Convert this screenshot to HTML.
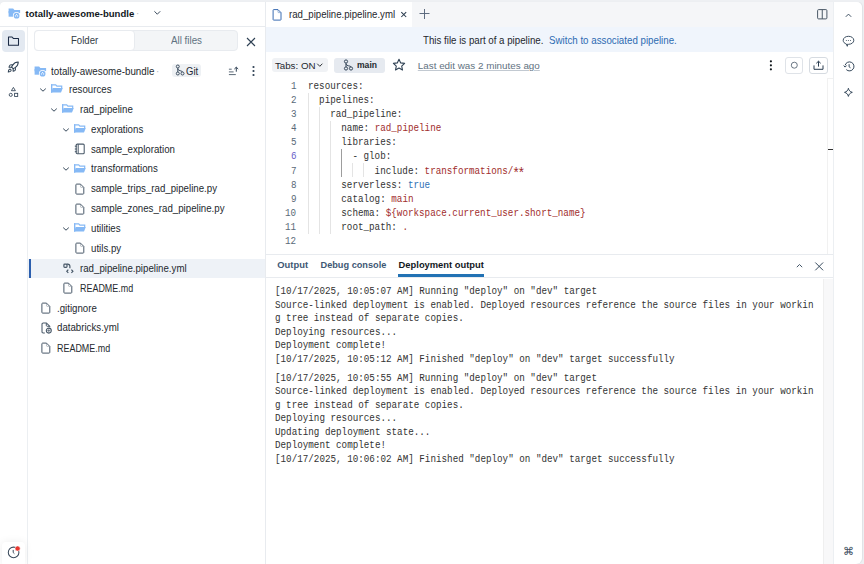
<!DOCTYPE html>
<html><head><meta charset="utf-8"><style>
html,body{margin:0;padding:0;width:864px;height:564px;overflow:hidden;background:#eef0f3;font-family:'Liberation Sans', sans-serif}
.t{position:absolute;white-space:nowrap}
.k{color:#333} .s{color:#9f2d2d} .b{color:#2f6fb5} .ast{display:inline-block;transform:translateY(3px) scale(1.4)}
</style></head><body>
<div style="position:absolute;left:0px;top:0px;width:864px;height:564px;background:#eef0f3"></div>
<div style="position:absolute;left:0px;top:2px;width:862px;height:562px;background:#fff;border-top-left-radius:4px;border-top-right-radius:5px;border-bottom-right-radius:6px;box-shadow:0.5px 0 1px rgba(0,0,0,.06)"></div>
<div style="position:absolute;left:0px;top:26px;width:265px;height:1px;background:#e8ebef"></div>
<svg style="position:absolute;left:7.5px;top:8.3px;" width="13" height="11" viewBox="0 0 13 11" fill="none"><path d="M.6 .4h4.5l1.3 1.6h5.7v3.2H.6z" fill="#86b9f5"/><rect x=".6" y="3" width="6.5" height="5.7" fill="#86b9f5"/><circle cx="8.6" cy="7.7" r="3.7" fill="#fff"/><circle cx="8.6" cy="7.7" r="2.9" fill="#86b9f5"/><circle cx="7.6" cy="7.9" r=".6" fill="#fff"/><circle cx="9.6" cy="7.9" r=".6" fill="#fff"/><circle cx="8.6" cy="6.6" r=".6" fill="#fff"/></svg>
<div class="t" style="left:25.50px;top:7.00px;font-size:9.550px;line-height:14px;color:#11171c;font-weight:700;font-family:'Liberation Sans', sans-serif;">totally-awesome-bundle</div>
<div class="t" style="left:135.50px;top:7.00px;font-size:10.123px;line-height:14px;color:#b0b8c0;font-weight:400;font-family:'Liberation Sans', sans-serif;transform:scaleX(0.9434);transform-origin:0 0;">·</div>
<svg style="position:absolute;left:153px;top:10px;" width="8" height="6" viewBox="0 0 8 6" fill="none"><path d="M1.4 1.3l2.9 2.9 2.9-2.9" stroke="#2e4053" stroke-width=".95"/></svg>
<div style="position:absolute;left:27px;top:27px;width:1px;height:537px;background:#eceff2"></div>
<div style="position:absolute;left:2px;top:30px;width:23px;height:22px;background:#e3e9f1;border-radius:4px"></div>
<svg style="position:absolute;left:7px;top:35px;" width="13" height="12" viewBox="0 0 13 12" fill="none"><path d="M1.5 2h3.6l1.2 1.4h5.2V10.3H1.5z" stroke="#1b2a44" stroke-width="1.05" stroke-linejoin="round"/></svg>
<svg style="position:absolute;left:6.7px;top:61.1px;" width="12.3" height="12.3" viewBox="0 0 24 24" fill="none"><g stroke="#2e4053" stroke-width="2" stroke-linecap="round" stroke-linejoin="round"><path d="M4.5 16.5c-1.5 1.26-2 5-2 5s3.74-.5 5-2c.71-.84.7-2.13-.09-2.91a2.18 2.18 0 0 0-2.91-.09z"/><path d="M12 15l-3-3a22 22 0 0 1 2-3.95A12.88 12.88 0 0 1 22 2c0 2.72-.78 7.5-6 11a22.35 22.35 0 0 1-4 2z"/><path d="M9 12H4s.55-3.03 2-4c1.62-1.08 5 0 5 0"/><path d="M12 15v5s3.03-.55 4-2c1.08-1.62 0-5 0-5"/></g></svg>
<svg style="position:absolute;left:7px;top:85px;" width="13" height="13" viewBox="0 0 13 13" fill="none"><path d="M6.4 2.4L8.4 5.7H4.4z" stroke="#2e4053" stroke-width=".85" stroke-linejoin="round"/><circle cx="3.75" cy="9.85" r="1.55" stroke="#2e4053" stroke-width=".85"/><rect x="7.6" y="8.3" width="3.1" height="3.1" stroke="#2e4053" stroke-width=".85"/></svg>
<div style="position:absolute;left:2px;top:542px;width:23px;height:24px;background:#fff;border-radius:4px;box-shadow:0 0 8px rgba(0,0,0,.07)"></div>
<svg style="position:absolute;left:6px;top:545px;" width="16" height="16" viewBox="0 0 16 16" fill="none"><circle cx="7.6" cy="7.4" r="5.3" stroke="#3b4b5c" stroke-width="1.05"/><path d="M7.2 4.9v2.6l1.2 1.2" stroke="#3b4b5c" stroke-width="1"/><circle cx="11.6" cy="3.5" r="2.6" fill="#e8372f" stroke="#fff" stroke-width=".6"/></svg>
<div style="position:absolute;left:34px;top:29.5px;width:204px;height:21px;background:#f3f5f7;border:1px solid #e8ebef;border-radius:4px;box-sizing:border-box"></div>
<div style="position:absolute;left:34px;top:29.5px;width:101px;height:21px;background:#fff;border:1px solid #e8ebef;border-radius:4px;box-sizing:border-box"></div>
<div class="t" style="left:71.10px;top:34.00px;font-size:10.176px;line-height:14px;color:#333d45;font-weight:400;font-family:'Liberation Sans', sans-serif;transform:scaleX(0.9434);transform-origin:0 0;">Folder</div>
<div class="t" style="left:171.40px;top:34.00px;font-size:10.388px;line-height:14px;color:#5f7281;font-weight:400;font-family:'Liberation Sans', sans-serif;transform:scaleX(0.9434);transform-origin:0 0;">All files</div>
<svg style="position:absolute;left:245px;top:36px;" width="12" height="12" viewBox="0 0 12 12" fill="none"><path d="M2 2l8 8M10 2l-8 8" stroke="#2e4053" stroke-width="1.1"/></svg>
<svg style="position:absolute;left:33.6px;top:65.5px;" width="13" height="11" viewBox="0 0 13 11" fill="none"><path d="M.6 .4h4.5l1.3 1.6h5.7v3.2H.6z" fill="#86b9f5"/><rect x=".6" y="3" width="6.5" height="5.7" fill="#86b9f5"/><circle cx="8.6" cy="7.7" r="3.7" fill="#fff"/><circle cx="8.6" cy="7.7" r="2.9" fill="#86b9f5"/><circle cx="7.6" cy="7.9" r=".6" fill="#fff"/><circle cx="9.6" cy="7.9" r=".6" fill="#fff"/><circle cx="8.6" cy="6.6" r=".6" fill="#fff"/></svg>
<div class="t" style="left:51.40px;top:65.00px;font-size:10.388px;line-height:14px;color:#24292e;font-weight:400;font-family:'Liberation Sans', sans-serif;transform:scaleX(0.9434);transform-origin:0 0;">totally-awesome-bundle</div>
<div class="t" style="left:156.00px;top:65.00px;font-size:10.388px;line-height:14px;color:#b0b8c0;font-weight:400;font-family:'Liberation Sans', sans-serif;transform:scaleX(0.9434);transform-origin:0 0;">·</div>
<svg style="position:absolute;left:39.0px;top:86.88px;" width="8" height="6" viewBox="0 0 8 6" fill="none"><path d="M1.2 1.6l2.8 2.6 2.8-2.6" stroke="#2e4053" stroke-width=".95"/></svg>
<svg style="position:absolute;left:51.0px;top:83.97999999999999px;" width="12" height="10" viewBox="0 0 12 10" fill="none"><path d="M.6 8.6V.8h4.1l1.2 1.3h4.8v2.2" stroke="#86b9f5" stroke-width="1.2" fill="none"/><path d="M.2 8.6L1.6 4.1h10.2L10 8.6z" fill="#86b9f5"/><rect x=".1" y=".2" width="1.1" height="8.4" fill="#86b9f5"/></svg>
<div class="t" style="left:68.70px;top:83.00px;font-size:10.282px;line-height:14px;color:#24292e;font-weight:400;font-family:'Liberation Sans', sans-serif;transform:scaleX(0.9434);transform-origin:0 0;">resources</div>
<svg style="position:absolute;left:50.3px;top:106.75999999999999px;" width="8" height="6" viewBox="0 0 8 6" fill="none"><path d="M1.2 1.6l2.8 2.6 2.8-2.6" stroke="#2e4053" stroke-width=".95"/></svg>
<svg style="position:absolute;left:62.3px;top:103.85999999999999px;" width="12" height="10" viewBox="0 0 12 10" fill="none"><path d="M.6 8.6V.8h4.1l1.2 1.3h4.8v2.2" stroke="#86b9f5" stroke-width="1.2" fill="none"/><path d="M.2 8.6L1.6 4.1h10.2L10 8.6z" fill="#86b9f5"/><rect x=".1" y=".2" width="1.1" height="8.4" fill="#86b9f5"/></svg>
<div class="t" style="left:80.00px;top:103.00px;font-size:10.282px;line-height:14px;color:#24292e;font-weight:400;font-family:'Liberation Sans', sans-serif;transform:scaleX(0.9434);transform-origin:0 0;">rad_pipeline</div>
<svg style="position:absolute;left:61.6px;top:126.63999999999999px;" width="8" height="6" viewBox="0 0 8 6" fill="none"><path d="M1.2 1.6l2.8 2.6 2.8-2.6" stroke="#2e4053" stroke-width=".95"/></svg>
<svg style="position:absolute;left:73.6px;top:123.73999999999998px;" width="12" height="10" viewBox="0 0 12 10" fill="none"><path d="M.6 8.6V.8h4.1l1.2 1.3h4.8v2.2" stroke="#86b9f5" stroke-width="1.2" fill="none"/><path d="M.2 8.6L1.6 4.1h10.2L10 8.6z" fill="#86b9f5"/><rect x=".1" y=".2" width="1.1" height="8.4" fill="#86b9f5"/></svg>
<div class="t" style="left:91.30px;top:123.00px;font-size:10.282px;line-height:14px;color:#24292e;font-weight:400;font-family:'Liberation Sans', sans-serif;transform:scaleX(0.9434);transform-origin:0 0;">explorations</div>
<svg style="position:absolute;left:74.1px;top:142.92px;" width="12" height="12" viewBox="0 0 12 12" fill="none"><rect x="2.2" y="1.1" width="8" height="9.6" rx="1" stroke="#485868" stroke-width="1.05"/><path d="M4.2 1.2v9.4 M.8 3.2h1.9M.8 6h1.9M.8 8.7h1.9" stroke="#485868" stroke-width="1"/></svg>
<div class="t" style="left:91.10px;top:143.00px;font-size:10.282px;line-height:14px;color:#24292e;font-weight:400;font-family:'Liberation Sans', sans-serif;transform:scaleX(0.9434);transform-origin:0 0;">sample_exploration</div>
<svg style="position:absolute;left:61.6px;top:166.39999999999998px;" width="8" height="6" viewBox="0 0 8 6" fill="none"><path d="M1.2 1.6l2.8 2.6 2.8-2.6" stroke="#2e4053" stroke-width=".95"/></svg>
<svg style="position:absolute;left:73.6px;top:163.49999999999997px;" width="12" height="10" viewBox="0 0 12 10" fill="none"><path d="M.6 8.6V.8h4.1l1.2 1.3h4.8v2.2" stroke="#86b9f5" stroke-width="1.2" fill="none"/><path d="M.2 8.6L1.6 4.1h10.2L10 8.6z" fill="#86b9f5"/><rect x=".1" y=".2" width="1.1" height="8.4" fill="#86b9f5"/></svg>
<div class="t" style="left:91.30px;top:162.00px;font-size:10.282px;line-height:14px;color:#24292e;font-weight:400;font-family:'Liberation Sans', sans-serif;transform:scaleX(0.9434);transform-origin:0 0;">transformations</div>
<svg style="position:absolute;left:74.6px;top:182.68px;" width="10" height="12" viewBox="0 0 10 12" fill="none"><path d="M1.6 1.1h3.9l3.3 3.3v6c0 .4-.3.7-.7.7H1.6c-.4 0-.7-.3-.7-.7V1.8c0-.4.3-.7.7-.7z" stroke="#485868" stroke-width="1" stroke-linejoin="round"/><path d="M5.5 1.3v2.4c0 .4.3.7.7.7h2.4" stroke="#485868" stroke-width=".6" opacity=".6"/></svg>
<div class="t" style="left:91.10px;top:182.00px;font-size:10.282px;line-height:14px;color:#24292e;font-weight:400;font-family:'Liberation Sans', sans-serif;transform:scaleX(0.9434);transform-origin:0 0;">sample_trips_rad_pipeline.py</div>
<svg style="position:absolute;left:74.6px;top:202.56px;" width="10" height="12" viewBox="0 0 10 12" fill="none"><path d="M1.6 1.1h3.9l3.3 3.3v6c0 .4-.3.7-.7.7H1.6c-.4 0-.7-.3-.7-.7V1.8c0-.4.3-.7.7-.7z" stroke="#485868" stroke-width="1" stroke-linejoin="round"/><path d="M5.5 1.3v2.4c0 .4.3.7.7.7h2.4" stroke="#485868" stroke-width=".6" opacity=".6"/></svg>
<div class="t" style="left:91.10px;top:202.00px;font-size:10.282px;line-height:14px;color:#24292e;font-weight:400;font-family:'Liberation Sans', sans-serif;transform:scaleX(0.9434);transform-origin:0 0;">sample_zones_rad_pipeline.py</div>
<svg style="position:absolute;left:61.6px;top:226.04px;" width="8" height="6" viewBox="0 0 8 6" fill="none"><path d="M1.2 1.6l2.8 2.6 2.8-2.6" stroke="#2e4053" stroke-width=".95"/></svg>
<svg style="position:absolute;left:73.6px;top:223.14px;" width="12" height="10" viewBox="0 0 12 10" fill="none"><path d="M.6 8.6V.8h4.1l1.2 1.3h4.8v2.2" stroke="#86b9f5" stroke-width="1.2" fill="none"/><path d="M.2 8.6L1.6 4.1h10.2L10 8.6z" fill="#86b9f5"/><rect x=".1" y=".2" width="1.1" height="8.4" fill="#86b9f5"/></svg>
<div class="t" style="left:91.30px;top:222.00px;font-size:10.282px;line-height:14px;color:#24292e;font-weight:400;font-family:'Liberation Sans', sans-serif;transform:scaleX(0.9434);transform-origin:0 0;">utilities</div>
<svg style="position:absolute;left:74.6px;top:242.32px;" width="10" height="12" viewBox="0 0 10 12" fill="none"><path d="M1.6 1.1h3.9l3.3 3.3v6c0 .4-.3.7-.7.7H1.6c-.4 0-.7-.3-.7-.7V1.8c0-.4.3-.7.7-.7z" stroke="#485868" stroke-width="1" stroke-linejoin="round"/><path d="M5.5 1.3v2.4c0 .4.3.7.7.7h2.4" stroke="#485868" stroke-width=".6" opacity=".6"/></svg>
<div class="t" style="left:91.10px;top:242.00px;font-size:10.282px;line-height:14px;color:#24292e;font-weight:400;font-family:'Liberation Sans', sans-serif;transform:scaleX(0.9434);transform-origin:0 0;">utils.py</div>
<div style="position:absolute;left:28px;top:258.9px;width:237px;height:19.3px;background:#eef2f7"></div>
<div style="position:absolute;left:28.5px;top:258.9px;width:2.5px;height:19.3px;background:#2c5fae"></div>
<svg style="position:absolute;left:62px;top:261.59999999999997px;" width="12" height="12" viewBox="0 0 12 12" fill="none"><rect x="1.9" y="2.2" width="3.1" height="3.1" rx=".8" stroke="#485868" stroke-width="1.2"/><path d="M5 2.2h.6c1.3 0 2.3 1 2.3 2.3v1.8" stroke="#485868" stroke-width="1.2"/><path d="M6.3 7.7L4.8 9.3l1.5 1.6M9.4 7.7l1.5 1.6-1.5 1.6" stroke="#485868" stroke-width="1.2"/></svg>
<div class="t" style="left:79.80px;top:262.00px;font-size:10.282px;line-height:14px;color:#24292e;font-weight:400;font-family:'Liberation Sans', sans-serif;transform:scaleX(0.9434);transform-origin:0 0;">rad_pipeline.pipeline.yml</div>
<svg style="position:absolute;left:63.0px;top:282.0799999999999px;" width="10" height="12" viewBox="0 0 10 12" fill="none"><path d="M1.6 1.1h3.9l3.3 3.3v6c0 .4-.3.7-.7.7H1.6c-.4 0-.7-.3-.7-.7V1.8c0-.4.3-.7.7-.7z" stroke="#485868" stroke-width="1" stroke-linejoin="round"/><path d="M5.5 1.3v2.4c0 .4.3.7.7.7h2.4" stroke="#485868" stroke-width=".6" opacity=".6"/></svg>
<div class="t" style="left:79.80px;top:282.00px;font-size:10.113px;line-height:14px;color:#24292e;font-weight:400;font-family:'Liberation Sans', sans-serif;transform:scaleX(0.8850);transform-origin:0 0;">README.md</div>
<svg style="position:absolute;left:40.6px;top:301.96px;" width="10" height="12" viewBox="0 0 10 12" fill="none"><path d="M1.6 1.1h3.9l3.3 3.3v6c0 .4-.3.7-.7.7H1.6c-.4 0-.7-.3-.7-.7V1.8c0-.4.3-.7.7-.7z" stroke="#485868" stroke-width="1" stroke-linejoin="round"/><path d="M5.5 1.3v2.4c0 .4.3.7.7.7h2.4" stroke="#485868" stroke-width=".6" opacity=".6"/></svg>
<div class="t" style="left:57.30px;top:302.00px;font-size:10.282px;line-height:14px;color:#24292e;font-weight:400;font-family:'Liberation Sans', sans-serif;transform:scaleX(0.9434);transform-origin:0 0;">.gitignore</div>
<svg style="position:absolute;left:40.6px;top:321.84px;" width="12" height="12" viewBox="0 0 12 12" fill="none"><path d="M3.8 10.9H2.2c-.7 0-1.2-.5-1.2-1.2V2.2c0-.7.5-1.2 1.2-1.2h3.3L8.8 4.3v1" stroke="#485868" stroke-width="1.05" stroke-linejoin="round"/><path d="M5.3 1.2v2.2c0 .5.3.9.9.9h2.4" stroke="#485868" stroke-width="1"/><circle cx="7.8" cy="8.6" r="2.5" stroke="#485868" stroke-width="1.05"/><path d="M7.8 6.8v3.6M6.2 8.6h3.2" stroke="#485868" stroke-width=".7"/></svg>
<div class="t" style="left:57.30px;top:321.00px;font-size:10.282px;line-height:14px;color:#24292e;font-weight:400;font-family:'Liberation Sans', sans-serif;transform:scaleX(0.9434);transform-origin:0 0;">databricks.yml</div>
<svg style="position:absolute;left:40.6px;top:341.71999999999997px;" width="10" height="12" viewBox="0 0 10 12" fill="none"><path d="M1.6 1.1h3.9l3.3 3.3v6c0 .4-.3.7-.7.7H1.6c-.4 0-.7-.3-.7-.7V1.8c0-.4.3-.7.7-.7z" stroke="#485868" stroke-width="1" stroke-linejoin="round"/><path d="M5.5 1.3v2.4c0 .4.3.7.7.7h2.4" stroke="#485868" stroke-width=".6" opacity=".6"/></svg>
<div class="t" style="left:57.30px;top:342.00px;font-size:10.113px;line-height:14px;color:#24292e;font-weight:400;font-family:'Liberation Sans', sans-serif;transform:scaleX(0.8850);transform-origin:0 0;">README.md</div>
<div style="position:absolute;left:171.9px;top:63.6px;width:29px;height:13.2px;background:#eef1f4;border-radius:3px"></div>
<svg style="position:absolute;left:175px;top:64px;" width="10" height="12" viewBox="0 0 10 12" fill="none"><circle cx="2.8" cy="2.5" r="1.5" stroke="#2e4053" stroke-width=".9"/><circle cx="2.8" cy="9.5" r="1.5" stroke="#2e4053" stroke-width=".9"/><circle cx="7.5" cy="9.5" r="1.5" stroke="#2e4053" stroke-width=".9"/><path d="M2.8 4v4 M2.8 5c0 2 4.7 1.5 4.7 3" stroke="#2e4053" stroke-width=".9"/></svg>
<div class="t" style="left:186.30px;top:65.00px;font-size:10.070px;line-height:14px;color:#1f2a35;font-weight:400;font-family:'Liberation Sans', sans-serif;transform:scaleX(0.9434);transform-origin:0 0;">Git</div>
<svg style="position:absolute;left:228px;top:66px;" width="12" height="10" viewBox="0 0 12 10" fill="none"><path d="M.9 3.2h2.8M.9 5.9h4.7M.9 8.6h6.9" stroke="#5b6977" stroke-width="1"/><path d="M8.3 5.7V1.3M6.4 3l1.9-1.8L10.2 3" stroke="#2e4053" stroke-width="1"/></svg>
<svg style="position:absolute;left:251px;top:65px;" width="5" height="12" viewBox="0 0 5 12" fill="none"><circle cx="2.5" cy="2" r="1.1" fill="#2e4053"/><circle cx="2.5" cy="6" r="1.1" fill="#2e4053"/><circle cx="2.5" cy="10" r="1.1" fill="#2e4053"/></svg>
<div style="position:absolute;left:265px;top:2px;width:1px;height:562px;background:#e8ebef"></div>
<div style="position:absolute;left:266px;top:2px;width:568px;height:25px;background:#f5f6f8"></div>
<div style="position:absolute;left:266px;top:26.5px;width:568px;height:0.5px;background:#e8ebef"></div>
<div style="position:absolute;left:266px;top:2px;width:146.2px;height:25px;background:#fff"></div>
<svg style="position:absolute;left:272px;top:8px;" width="11" height="13" viewBox="0 0 11 13" fill="none"><path d="M1.6 1.6h4.4l3 3v7c0 .3-.2.5-.5.5H1.6c-.3 0-.5-.2-.5-.5V2.1c0-.3.2-.5.5-.5z" stroke="#3a6cb2" stroke-width="1" stroke-linejoin="round"/><path d="M6 1.8v2.3c0 .3.2.5.5.5h2.3" stroke="#3a6cb2" stroke-width=".7" opacity=".7"/></svg>
<div class="t" style="left:288.70px;top:8.00px;font-size:10.229px;line-height:14px;color:#1f272d;font-weight:400;font-family:'Liberation Sans', sans-serif;transform:scaleX(0.9434);transform-origin:0 0;">rad_pipeline.pipeline.yml</div>
<svg style="position:absolute;left:400px;top:11px;" width="8" height="8" viewBox="0 0 8 8" fill="none"><path d="M1.3 1.1l4.9 4.9M6.2 1.1L1.3 6" stroke="#2a3b4d" stroke-width="1.05"/></svg>
<svg style="position:absolute;left:419px;top:8px;" width="12" height="12" viewBox="0 0 12 12" fill="none"><path d="M5.5 1v10M.5 5.5h10" stroke="#56657a" stroke-width=".95"/></svg>
<svg style="position:absolute;left:816px;top:8px;" width="12" height="12" viewBox="0 0 12 12" fill="none"><rect x="1.6" y="1.6" width="9.3" height="9.3" rx="1" stroke="#4a5866" stroke-width="1"/><path d="M6.25 1.6v9.3" stroke="#4a5866" stroke-width="1"/></svg>
<div style="position:absolute;left:266px;top:27px;width:568px;height:25px;background:#f0f5fc"></div>
<div class="t" style="left:422.50px;top:34.00px;font-size:10.303px;line-height:14px;color:#1f272d;font-weight:400;font-family:'Liberation Sans', sans-serif;transform:scaleX(0.9434);transform-origin:0 0;">This file is part of a pipeline.</div>
<div class="t" style="left:549.00px;top:34.00px;font-size:10.335px;line-height:14px;color:#2c6ab2;font-weight:400;font-family:'Liberation Sans', sans-serif;transform:scaleX(0.9434);transform-origin:0 0;">Switch to associated pipeline.</div>
<div style="position:absolute;left:271.5px;top:58.3px;width:56px;height:14px;background:#f0f2f5;border-radius:3px"></div>
<div class="t" style="left:274.90px;top:59.00px;font-size:9.750px;line-height:14px;color:#24292e;font-weight:400;font-family:'Liberation Sans', sans-serif;">Tabs: ON</div>
<svg style="position:absolute;left:316px;top:62px;" width="8" height="6" viewBox="0 0 8 6" fill="none"><path d="M1.2 1.7l2.6 2.6 2.6-2.6" stroke="#24292e" stroke-width=".95"/></svg>
<div style="position:absolute;left:334px;top:58.3px;width:50.5px;height:14.5px;background:#e6eaf0;border-radius:3px"></div>
<svg style="position:absolute;left:342.5px;top:59px;" width="11" height="12" viewBox="0 0 11 12" fill="none"><circle cx="3" cy="2.5" r="1.6" stroke="#2e4053" stroke-width=".95"/><circle cx="3" cy="9.5" r="1.6" stroke="#2e4053" stroke-width=".95"/><circle cx="8" cy="9.5" r="1.6" stroke="#2e4053" stroke-width=".95"/><path d="M3 4.1v3.8 M3 5c0 2.2 5 1.6 5 2.9" stroke="#2e4053" stroke-width=".95"/></svg>
<div class="t" style="left:356.70px;top:58.00px;font-size:9.700px;line-height:14px;color:#24292e;font-weight:700;font-family:'Liberation Sans', sans-serif;transform:scaleX(.885);transform-origin:0 0">main</div>
<svg style="position:absolute;left:392px;top:58px;" width="14" height="14" viewBox="0 0 14 14" fill="none"><path d="M7 1.3l1.7 3.6 3.9.5-2.9 2.7.8 3.9L7 10l-3.5 2 .8-3.9L1.4 5.4l3.9-.5z" stroke="#2e4053" stroke-width="1.1" stroke-linejoin="round"/></svg>
<div class="t" style="left:417.80px;top:59.00px;font-size:9.850px;line-height:14px;color:#5f7281;font-weight:400;font-family:'Liberation Sans', sans-serif;text-decoration:underline;text-decoration-color:#c2c9d1;text-underline-offset:1px">Last edit was 2 minutes ago</div>
<svg style="position:absolute;left:769px;top:59px;" width="5" height="13" viewBox="0 0 5 13" fill="none"><circle cx="1.9" cy="2.3" r="1.1" fill="#11171c"/><circle cx="1.9" cy="6.3" r="1.1" fill="#11171c"/><circle cx="1.9" cy="10.3" r="1.1" fill="#11171c"/></svg>
<div style="position:absolute;left:785.1px;top:57.1px;width:18.1px;height:16.7px;border:1px solid #dfe3e8;border-radius:3px;box-sizing:border-box"></div>
<svg style="position:absolute;left:790px;top:61px;" width="8" height="8" viewBox="0 0 8 8" fill="none"><circle cx="4.3" cy="4.2" r="3" stroke="#5b6977" stroke-width=".9"/></svg>
<div style="position:absolute;left:809.2px;top:57.1px;width:18.6px;height:16.7px;border:1px solid #d6dbe1;border-radius:3px;box-sizing:border-box"></div>
<svg style="position:absolute;left:812px;top:59px;" width="12" height="12" viewBox="0 0 12 12" fill="none"><path d="M6.5 7.6V2.3M4.3 4.3l2.2-2.1 2.2 2.1M2 6.4v3.9h9V6.4" stroke="#2b3d50" stroke-width="1"/></svg>
<div class="t" style="left:290.95px;top:79.00px;font-size:10.360px;line-height:14px;color:#5a6a78;font-weight:400;font-family:'Liberation Mono', monospace;transform:scaleX(0.8929);transform-origin:0 0;">1</div>
<div class="t" style="left:308.00px;top:79.00px;font-size:10.360px;line-height:14px;color:#333;font-weight:400;font-family:'Liberation Mono', monospace;transform:scaleX(0.8929);transform-origin:0 0;white-space:pre"><span class="k">resources:</span></div>
<div class="t" style="left:290.95px;top:93.00px;font-size:10.360px;line-height:14px;color:#5a6a78;font-weight:400;font-family:'Liberation Mono', monospace;transform:scaleX(0.8929);transform-origin:0 0;">2</div>
<div class="t" style="left:308.00px;top:93.00px;font-size:10.360px;line-height:14px;color:#333;font-weight:400;font-family:'Liberation Mono', monospace;transform:scaleX(0.8929);transform-origin:0 0;white-space:pre">  <span class="k">pipelines:</span></div>
<div class="t" style="left:290.95px;top:107.00px;font-size:10.360px;line-height:14px;color:#5a6a78;font-weight:400;font-family:'Liberation Mono', monospace;transform:scaleX(0.8929);transform-origin:0 0;">3</div>
<div class="t" style="left:308.00px;top:107.00px;font-size:10.360px;line-height:14px;color:#333;font-weight:400;font-family:'Liberation Mono', monospace;transform:scaleX(0.8929);transform-origin:0 0;white-space:pre">    <span class="k">rad_pipeline:</span></div>
<div class="t" style="left:290.95px;top:121.00px;font-size:10.360px;line-height:14px;color:#5a6a78;font-weight:400;font-family:'Liberation Mono', monospace;transform:scaleX(0.8929);transform-origin:0 0;">4</div>
<div class="t" style="left:308.00px;top:121.00px;font-size:10.360px;line-height:14px;color:#333;font-weight:400;font-family:'Liberation Mono', monospace;transform:scaleX(0.8929);transform-origin:0 0;white-space:pre">      <span class="k">name:</span> <span class="s">rad_pipeline</span></div>
<div class="t" style="left:290.95px;top:135.00px;font-size:10.360px;line-height:14px;color:#5a6a78;font-weight:400;font-family:'Liberation Mono', monospace;transform:scaleX(0.8929);transform-origin:0 0;">5</div>
<div class="t" style="left:308.00px;top:135.00px;font-size:10.360px;line-height:14px;color:#333;font-weight:400;font-family:'Liberation Mono', monospace;transform:scaleX(0.8929);transform-origin:0 0;white-space:pre">      <span class="k">libraries:</span></div>
<div class="t" style="left:290.95px;top:149.00px;font-size:10.360px;line-height:14px;color:#6a5fc8;font-weight:400;font-family:'Liberation Mono', monospace;transform:scaleX(0.8929);transform-origin:0 0;">6</div>
<div class="t" style="left:308.00px;top:149.00px;font-size:10.360px;line-height:14px;color:#333;font-weight:400;font-family:'Liberation Mono', monospace;transform:scaleX(0.8929);transform-origin:0 0;white-space:pre">        <span class="k">- glob:</span></div>
<div class="t" style="left:290.95px;top:164.00px;font-size:10.360px;line-height:14px;color:#5a6a78;font-weight:400;font-family:'Liberation Mono', monospace;transform:scaleX(0.8929);transform-origin:0 0;">7</div>
<div class="t" style="left:308.00px;top:164.00px;font-size:10.360px;line-height:14px;color:#333;font-weight:400;font-family:'Liberation Mono', monospace;transform:scaleX(0.8929);transform-origin:0 0;white-space:pre">            <span class="k">include:</span> <span class="s">transformations/<span class="ast">*</span><span class="ast">*</span></span></div>
<div class="t" style="left:290.95px;top:178.00px;font-size:10.360px;line-height:14px;color:#5a6a78;font-weight:400;font-family:'Liberation Mono', monospace;transform:scaleX(0.8929);transform-origin:0 0;">8</div>
<div class="t" style="left:308.00px;top:178.00px;font-size:10.360px;line-height:14px;color:#333;font-weight:400;font-family:'Liberation Mono', monospace;transform:scaleX(0.8929);transform-origin:0 0;white-space:pre">      <span class="k">serverless:</span> <span class="b">true</span></div>
<div class="t" style="left:290.95px;top:192.00px;font-size:10.360px;line-height:14px;color:#5a6a78;font-weight:400;font-family:'Liberation Mono', monospace;transform:scaleX(0.8929);transform-origin:0 0;">9</div>
<div class="t" style="left:308.00px;top:192.00px;font-size:10.360px;line-height:14px;color:#333;font-weight:400;font-family:'Liberation Mono', monospace;transform:scaleX(0.8929);transform-origin:0 0;white-space:pre">      <span class="k">catalog:</span> <span class="s">main</span></div>
<div class="t" style="left:285.40px;top:206.00px;font-size:10.360px;line-height:14px;color:#5a6a78;font-weight:400;font-family:'Liberation Mono', monospace;transform:scaleX(0.8929);transform-origin:0 0;">10</div>
<div class="t" style="left:308.00px;top:206.00px;font-size:10.360px;line-height:14px;color:#333;font-weight:400;font-family:'Liberation Mono', monospace;transform:scaleX(0.8929);transform-origin:0 0;white-space:pre">      <span class="k">schema:</span> <span class="s">${workspace.current_user.short_name}</span></div>
<div class="t" style="left:285.40px;top:220.00px;font-size:10.360px;line-height:14px;color:#5a6a78;font-weight:400;font-family:'Liberation Mono', monospace;transform:scaleX(0.8929);transform-origin:0 0;">11</div>
<div class="t" style="left:308.00px;top:220.00px;font-size:10.360px;line-height:14px;color:#333;font-weight:400;font-family:'Liberation Mono', monospace;transform:scaleX(0.8929);transform-origin:0 0;white-space:pre">      <span class="k">root_path:</span> <span class="s">.</span></div>
<div class="t" style="left:285.40px;top:234.00px;font-size:10.360px;line-height:14px;color:#5a6a78;font-weight:400;font-family:'Liberation Mono', monospace;transform:scaleX(0.8929);transform-origin:0 0;">12</div>
<div class="t" style="left:308.00px;top:234.00px;font-size:10.360px;line-height:14px;color:#333;font-weight:400;font-family:'Liberation Mono', monospace;transform:scaleX(0.8929);transform-origin:0 0;white-space:pre"></div>
<div style="position:absolute;left:307.8px;top:92.55px;width:1.2px;height:141.5px;background:#e4e4e4"></div>
<div style="position:absolute;left:318.90000000000003px;top:106.69999999999999px;width:1.2px;height:127.35000000000001px;background:#e4e4e4"></div>
<div style="position:absolute;left:330.0px;top:120.85000000000001px;width:1.2px;height:113.2px;background:#e4e4e4"></div>
<div style="position:absolute;left:341.1px;top:149.15px;width:1.2px;height:28.3px;background:#9d9d9d"></div>
<div style="position:absolute;left:352.2px;top:163.3px;width:1.2px;height:14.15px;background:#e4e4e4"></div>
<div style="position:absolute;left:363.3px;top:163.3px;width:1.2px;height:14.15px;background:#e4e4e4"></div>
<div style="position:absolute;left:827px;top:78px;width:6px;height:176px;background:#fff;border-left:1px solid #f1f1f1;border-top:1px solid #f1f1f1;box-sizing:border-box"></div>
<div style="position:absolute;left:828.3px;top:148.6px;width:5px;height:1.5px;background:#333"></div>
<div style="position:absolute;left:266px;top:254px;width:568px;height:1px;background:#e8ebef"></div>
<div style="position:absolute;left:266px;top:277.3px;width:568px;height:1px;background:#e8ebef"></div>
<div class="t" style="left:277.30px;top:258.00px;font-size:9.400px;line-height:14px;color:#3e5874;font-weight:700;font-family:'Liberation Sans', sans-serif;">Output</div>
<div class="t" style="left:320.50px;top:258.00px;font-size:9.200px;line-height:14px;color:#3e5874;font-weight:700;font-family:'Liberation Sans', sans-serif;">Debug console</div>
<div class="t" style="left:398.60px;top:258.00px;font-size:9.370px;line-height:14px;color:#11171c;font-weight:700;font-family:'Liberation Sans', sans-serif;">Deployment output</div>
<div style="position:absolute;left:398.3px;top:274.2px;width:86px;height:2.6px;background:#2272b4"></div>
<svg style="position:absolute;left:795px;top:262px;" width="9" height="7" viewBox="0 0 9 7" fill="none"><path d="M1.8 5.2L4.5 2.5l2.7 2.7" stroke="#3a4d60" stroke-width=".95"/></svg>
<svg style="position:absolute;left:813px;top:260px;" width="12" height="12" viewBox="0 0 12 12" fill="none"><path d="M2.3 2.5l7.8 7.8M10.1 2.5l-7.8 7.8" stroke="#2e4256" stroke-width=".95"/></svg>
<div style="position:absolute;left:823px;top:278.5px;width:10px;height:285.5px;background:#f8f8f9;border-left:1px solid #efefef;box-sizing:border-box"></div>
<div class="t" style="left:275.00px;top:285.00px;font-size:10.360px;line-height:13px;color:#333;font-weight:400;font-family:'Liberation Mono', monospace;transform:scaleX(0.8929);transform-origin:0 0;white-space:pre">[10/17/2025, 10:05:07 AM] Running "deploy" on "dev" target</div>
<div class="t" style="left:275.00px;top:299.00px;font-size:10.360px;line-height:13px;color:#333;font-weight:400;font-family:'Liberation Mono', monospace;transform:scaleX(0.8929);transform-origin:0 0;white-space:pre">Source-linked deployment is enabled. Deployed resources reference the source files in your workin</div>
<div class="t" style="left:275.00px;top:312.00px;font-size:10.360px;line-height:13px;color:#333;font-weight:400;font-family:'Liberation Mono', monospace;transform:scaleX(0.8929);transform-origin:0 0;white-space:pre">g tree instead of separate copies.</div>
<div class="t" style="left:275.00px;top:326.00px;font-size:10.360px;line-height:13px;color:#333;font-weight:400;font-family:'Liberation Mono', monospace;transform:scaleX(0.8929);transform-origin:0 0;white-space:pre">Deploying resources...</div>
<div class="t" style="left:275.00px;top:339.00px;font-size:10.360px;line-height:13px;color:#333;font-weight:400;font-family:'Liberation Mono', monospace;transform:scaleX(0.8929);transform-origin:0 0;white-space:pre">Deployment complete!</div>
<div class="t" style="left:275.00px;top:353.00px;font-size:10.360px;line-height:13px;color:#333;font-weight:400;font-family:'Liberation Mono', monospace;transform:scaleX(0.8929);transform-origin:0 0;white-space:pre">[10/17/2025, 10:05:12 AM] Finished "deploy" on "dev" target successfully</div>
<div class="t" style="left:275.00px;top:372.00px;font-size:10.360px;line-height:13px;color:#333;font-weight:400;font-family:'Liberation Mono', monospace;transform:scaleX(0.8929);transform-origin:0 0;white-space:pre">[10/17/2025, 10:05:55 AM] Running "deploy" on "dev" target</div>
<div class="t" style="left:275.00px;top:385.00px;font-size:10.360px;line-height:13px;color:#333;font-weight:400;font-family:'Liberation Mono', monospace;transform:scaleX(0.8929);transform-origin:0 0;white-space:pre">Source-linked deployment is enabled. Deployed resources reference the source files in your workin</div>
<div class="t" style="left:275.00px;top:399.00px;font-size:10.360px;line-height:13px;color:#333;font-weight:400;font-family:'Liberation Mono', monospace;transform:scaleX(0.8929);transform-origin:0 0;white-space:pre">g tree instead of separate copies.</div>
<div class="t" style="left:275.00px;top:412.00px;font-size:10.360px;line-height:13px;color:#333;font-weight:400;font-family:'Liberation Mono', monospace;transform:scaleX(0.8929);transform-origin:0 0;white-space:pre">Deploying resources...</div>
<div class="t" style="left:275.00px;top:426.00px;font-size:10.360px;line-height:13px;color:#333;font-weight:400;font-family:'Liberation Mono', monospace;transform:scaleX(0.8929);transform-origin:0 0;white-space:pre">Updating deployment state...</div>
<div class="t" style="left:275.00px;top:439.00px;font-size:10.360px;line-height:13px;color:#333;font-weight:400;font-family:'Liberation Mono', monospace;transform:scaleX(0.8929);transform-origin:0 0;white-space:pre">Deployment complete!</div>
<div class="t" style="left:275.00px;top:453.00px;font-size:10.360px;line-height:13px;color:#333;font-weight:400;font-family:'Liberation Mono', monospace;transform:scaleX(0.8929);transform-origin:0 0;white-space:pre">[10/17/2025, 10:06:02 AM] Finished "deploy" on "dev" target successfully</div>
<div style="position:absolute;left:833px;top:2px;width:1px;height:562px;background:#eceff2"></div>
<svg style="position:absolute;left:844px;top:12px;" width="9" height="7" viewBox="0 0 9 7" fill="none"><path d="M1.8 4.8L4.5 2.1l2.7 2.7" stroke="#34475a" stroke-width=".95"/></svg>
<svg style="position:absolute;left:841px;top:35px;" width="15" height="13" viewBox="0 0 15 13" fill="none"><path d="M7.5 1.3c3 0 5.3 1.7 5.3 4s-2.3 4-5.3 4c-.3 0-.6 0-.9-.1L6.3 11.3 5.4 9C3.6 8.5 2.2 7.2 2.2 5.3c0-2.3 2.3-4 5.3-4z" stroke="#34475a" stroke-width=".95" stroke-linejoin="round"/><circle cx="5.3" cy="5.5" r=".5" fill="#34475a"/><circle cx="7.4" cy="5.5" r=".5" fill="#34475a"/><circle cx="9.5" cy="5.5" r=".5" fill="#34475a"/></svg>
<svg style="position:absolute;left:841px;top:59px;" width="15" height="14" viewBox="0 0 15 14" fill="none"><path d="M4.1 6.3A4.5 4.5 0 1 1 5.3 10.6" stroke="#34475a" stroke-width="1"/><path d="M2.6 6.6l1.5 1.5 1.5-1.6" stroke="#34475a" stroke-width="1" stroke-linejoin="round"/><path d="M8.1 5.2v2.6l1.4 1" stroke="#34475a" stroke-width="1"/></svg>
<svg style="position:absolute;left:842px;top:86px;" width="13" height="13" viewBox="0 0 13 13" fill="none"><path d="M6.4 2.3c.5 2.2 1.6 3.4 3.9 4.05-2.3.65-3.4 1.85-3.9 4.05-.5-2.2-1.6-3.4-3.9-4.05 2.3-.65 3.4-1.85 3.9-4.05z" stroke="#34475a" stroke-width="1" stroke-linejoin="round"/></svg>
<div class="t" style="left:842.50px;top:544.00px;font-size:11.000px;line-height:14px;color:#3e4f61;font-weight:400;font-family:'Liberation Sans', sans-serif;">⌘</div>
</body></html>
